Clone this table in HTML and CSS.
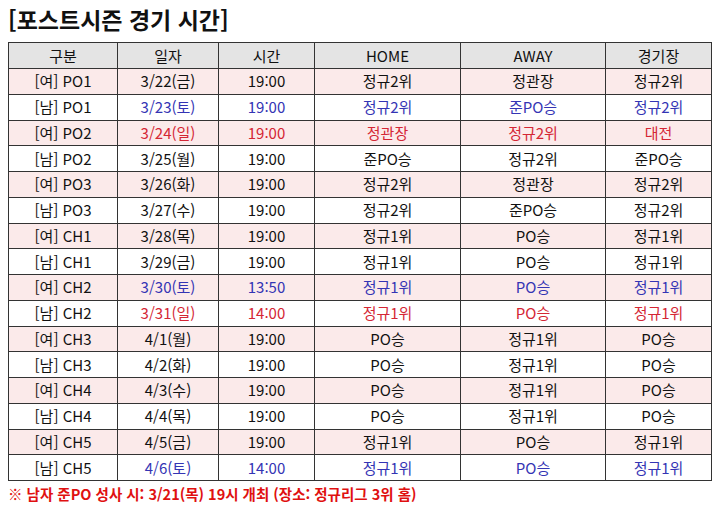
FILE: index.html
```html
<!DOCTYPE html>
<html lang="ko">
<head>
<meta charset="utf-8">
<link rel="stylesheet" href="styles.css">
</head>
<body>
<h1 class="title">[포스트시즌 경기 시간]</h1>
<table class="sched">
<colgroup><col class="c1"><col class="c2"><col class="c3"><col class="c4"><col class="c5"><col class="c6"></colgroup>
<thead><tr><th>구분</th><th>일자</th><th>시간</th><th>HOME</th><th>AWAY</th><th>경기장</th></tr></thead>
<tbody>
<tr class="w"><td>[여] PO1</td><td>3/22(금)</td><td>19:00</td><td>정규2위</td><td>정관장</td><td>정규2위</td></tr>
<tr class="blue"><td class="k">[남] PO1</td><td>3/23(토)</td><td>19:00</td><td>정규2위</td><td>준PO승</td><td>정규2위</td></tr>
<tr class="w red"><td class="k">[여] PO2</td><td>3/24(일)</td><td>19:00</td><td>정관장</td><td>정규2위</td><td>대전</td></tr>
<tr><td>[남] PO2</td><td>3/25(월)</td><td>19:00</td><td>준PO승</td><td>정규2위</td><td>준PO승</td></tr>
<tr class="w"><td>[여] PO3</td><td>3/26(화)</td><td>19:00</td><td>정규2위</td><td>정관장</td><td>정규2위</td></tr>
<tr><td>[남] PO3</td><td>3/27(수)</td><td>19:00</td><td>정규2위</td><td>준PO승</td><td>정규2위</td></tr>
<tr class="w"><td>[여] CH1</td><td>3/28(목)</td><td>19:00</td><td>정규1위</td><td>PO승</td><td>정규1위</td></tr>
<tr><td>[남] CH1</td><td>3/29(금)</td><td>19:00</td><td>정규1위</td><td>PO승</td><td>정규1위</td></tr>
<tr class="w blue"><td class="k">[여] CH2</td><td>3/30(토)</td><td>13:50</td><td>정규1위</td><td>PO승</td><td>정규1위</td></tr>
<tr class="red"><td class="k">[남] CH2</td><td>3/31(일)</td><td>14:00</td><td>정규1위</td><td>PO승</td><td>정규1위</td></tr>
<tr class="w"><td>[여] CH3</td><td>4/1(월)</td><td>19:00</td><td>PO승</td><td>정규1위</td><td>PO승</td></tr>
<tr><td>[남] CH3</td><td>4/2(화)</td><td>19:00</td><td>PO승</td><td>정규1위</td><td>PO승</td></tr>
<tr class="w"><td>[여] CH4</td><td>4/3(수)</td><td>19:00</td><td>PO승</td><td>정규1위</td><td>PO승</td></tr>
<tr><td>[남] CH4</td><td>4/4(목)</td><td>19:00</td><td>PO승</td><td>정규1위</td><td>PO승</td></tr>
<tr class="w"><td>[여] CH5</td><td>4/5(금)</td><td>19:00</td><td>정규1위</td><td>PO승</td><td>정규1위</td></tr>
<tr class="blue"><td class="k">[남] CH5</td><td>4/6(토)</td><td>14:00</td><td>정규1위</td><td>PO승</td><td>정규1위</td></tr>
</tbody>
</table>
<p class="note">※ 남자 준PO 성사 시: 3/21(목) 19시 개최 (장소: 정규리그 3위 홈)</p>
</body>
</html>
```
FILE: styles.css
```css
html, body { margin: 0; padding: 0; background: #fff; }
body {
  padding: 0 8px;
  font-family: "Noto Sans CJK KR", "Noto Sans", sans-serif;
  color: #111;
}
.title {
  margin: 0;
  padding-top: 4px;
  height: 42px;
  box-sizing: border-box;
  font-size: 23px;
  line-height: 30px;
  font-weight: bold;
  color: #111;
}
.sched {
  width: 703px;
  border-collapse: collapse;
  table-layout: fixed;
  font-size: 15px;
}
.c1 { width: 109px; }
.c2 { width: 101px; }
.c3 { width: 96px; }
.c4 { width: 146px; }
.c5 { width: 145px; }
.c6 { width: 106px; }
.sched th, .sched td {
  border: 1px solid #333;
  text-align: center;
  padding: 0;
  height: 24.75px;
  line-height: 20px;
  font-weight: normal;
  white-space: nowrap;
}
.sched th { background: #e4e4e4; height: 25px; }
.sched tr.w td { background: #fbeaea; }
.sched tr.blue td { color: #3434b4; }
.sched tr.red td { color: #d42634; }
.sched tr td.k { color: #111; }
.note {
  margin: 3px 0 0;
  font-size: 14.5px;
  line-height: 20px;
  font-weight: bold;
  color: #e01010;
}
```
